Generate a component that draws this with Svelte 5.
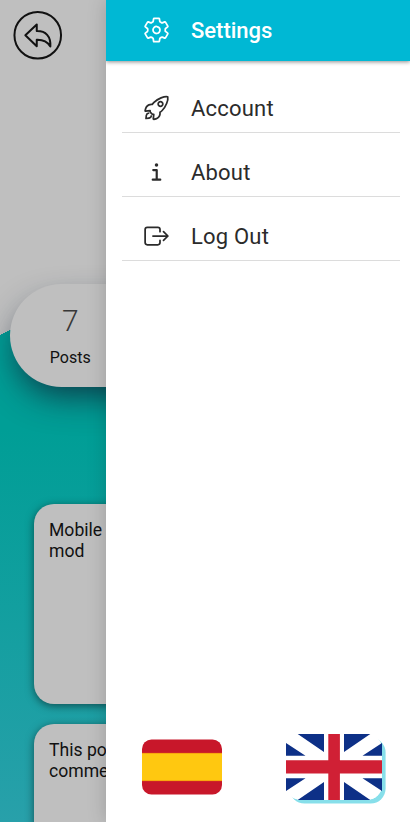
<script>
  const items = [
    { label: 'Account', icon: 'rocket' },
    { label: 'About', icon: 'info' },
    { label: 'Log Out', icon: 'exit' }
  ];
  const posts = [['Mobile', 'mod'], ['This post', 'comments']];
</script>

<div class="screen">
  <main class="profile">
    <header class="top">
      <svg class="back" viewBox="0.25 -0.25 50 50" width="50" height="50">
        <circle cx="25" cy="25" r="23.3" />
        <path d="M12.6 25 24 14.2V20.8C33 20.6 38.2 26 37.6 36.2C34.5 31.2 30 29.4 24 29.6V36Z" />
      </svg>
    </header>
    <section class="stats">
      <div class="stat">
        <span class="count">7</span>
        <span class="caption">Posts</span>
      </div>
    </section>
    <section class="posts">
      {#each posts as [first, second]}
        <article class="post">{first}<br />{second}</article>
      {/each}
    </section>
  </main>

  <aside class="menu">
    <header class="bar">
      <svg class="icon" viewBox="0 0 512 512">
        <path d="M262.29 192.31a64 64 0 1057.4 57.4 64.13 64.13 0 00-57.4-57.4zM416.39 256a154.34 154.34 0 01-1.53 20.79l45.21 35.46a10.81 10.81 0 012.45 13.75l-42.77 74a10.81 10.81 0 01-13.14 4.59l-44.9-18.08a16.11 16.11 0 00-15.17 1.75A164.48 164.48 0 01325 400.8a15.94 15.94 0 00-8.82 12.14l-6.73 47.89a11.08 11.08 0 01-10.68 9.17h-85.54a11.11 11.11 0 01-10.69-8.87l-6.72-47.82a16.07 16.07 0 00-9-12.22 155.3 155.3 0 01-21.46-12.57 16 16 0 00-15.11-1.71l-44.89 18.07a10.81 10.81 0 01-13.14-4.58l-42.77-74a10.8 10.8 0 012.45-13.75l38.21-30a16.05 16.05 0 006-14.08c-.36-4.17-.58-8.33-.58-12.5s.21-8.27.58-12.35a16 16 0 00-6.07-13.94l-38.19-30A10.81 10.81 0 0149.48 186l42.77-74a10.81 10.81 0 0113.14-4.59l44.9 18.08a16.11 16.11 0 0015.17-1.75A164.48 164.48 0 01187 111.2a15.94 15.94 0 008.82-12.14l6.73-47.89A11.08 11.08 0 01213.23 42h85.54a11.11 11.11 0 0110.69 8.87l6.72 47.82a16.07 16.07 0 009 12.22 155.3 155.3 0 0121.46 12.57 16 16 0 0015.11 1.71l44.89-18.07a10.81 10.81 0 0113.14 4.58l42.77 74a10.8 10.8 0 01-2.45 13.75l-38.21 30a16.05 16.05 0 00-6.05 14.08c.33 4.14.55 8.3.55 12.47z" />
      </svg>
      <h1>Settings</h1>
    </header>

    <nav>
      {#each items as item}
        <div class="item">
          <svg class="icon" viewBox="0 0 512 512">
            {#if item.icon === 'rocket'}
              <path d="M461.81 53.81a4.4 4.4 0 00-3.3-3.39c-54.38-13.3-180 34.09-248.13 102.17a294.9 294.9 0 00-33.09 39.08c-21-1.9-42-.3-59.88 7.5-50.49 22.2-65.18 80.18-69.28 105.07a9 9 0 009.8 10.4l81.07-8.9a180.29 180.29 0 001.1 18.3 18.15 18.15 0 005.3 11.09l31.39 31.39a18.15 18.15 0 0011.1 5.3 179.91 179.91 0 0018.19 1.1l-8.89 81a9 9 0 0010.39 9.79c24.9-4 83-18.69 105.07-69.17 7.8-17.9 9.4-38.79 7.6-59.69a293.91 293.91 0 0039.19-33.09c68.38-68 115.47-190.86 102.37-247.95zM298.66 213.67a42.7 42.7 0 1160.38 0 42.65 42.65 0 01-60.38 0z" />
              <path d="M109.64 352a45.06 45.06 0 00-26.35 12.84C65.67 382.52 64 448 64 448s65.52-1.67 83.15-19.31A44.73 44.73 0 00160 402.32" />
            {:else if item.icon === 'info'}
              <path class="heavy" d="M196 220h64v172M187 396h138" />
              <circle class="dot" cx="256" cy="128" r="32" />
            {:else}
              <path d="M320 176v-40a40 40 0 00-40-40H88a40 40 0 00-40 40v240a40 40 0 0040 40h192a40 40 0 0040-40v-40M384 176l80 80-80 80M191 256h273" />
            {/if}
          </svg>
          <span>{item.label}</span>
        </div>
      {/each}
    </nav>

    <footer class="languages">
      <svg class="spain" viewBox="0 0 80 56" width="80" height="56">
        <clipPath id="rounded"><rect y="0.4" width="80" height="55.1" rx="9.5" /></clipPath>
        <g clip-path="url(#rounded)">
          <rect width="80" height="56" fill="#c8172a" />
          <rect y="13.9" width="80" height="28.2" fill="#f79a0e" />
          <rect y="14.7" width="80" height="26.6" fill="#ffc810" />
        </g>
      </svg>
      <div class="selected">
        <svg viewBox="0 0 96 66" width="96" height="66">
          <rect width="96" height="66" rx="15" fill="#fff" />
          <path fill="#0d3087" d="M11.7 0H38V18ZM0 9 19.5 21.7H0ZM84.3 0H58V18ZM96 9 76.5 21.7H96ZM11.7 66H38V48ZM0 57 19.5 44.3H0ZM84.3 66H58V48ZM96 57 76.5 44.3H96Z" />
          <path fill="#d02035" d="M42.3 0H53.9V26.2H96V39.4H53.9V66H42.3V39.4H0V26.2H42.3Z" />
        </svg>
      </div>
    </footer>
  </aside>
</div>

<style>
  .screen {
    position: relative;
    width: 410px;
    height: 822px;
    overflow: hidden;
    background: #bfbfbf;
    font-family: Roboto, sans-serif;
  }
  .profile {
    display: flex;
    flex-direction: column;
    height: 822px;
    background: linear-gradient(#bfbfbf, #bfbfbf) 0 0 / 100% 284px no-repeat,
      linear-gradient(to bottom right, #bfbfbf 49.8%, transparent 50.2%) 0 284px / 102px 51px no-repeat,
      linear-gradient(#009e96 335px, #009e96 430px, #28a0aa 822px);
  }
  .top {
    height: 284px;
    flex: none;
  }
  .back {
    display: block;
    margin: 10px 0 0 13px;
    fill: none;
    stroke: #111;
    stroke-width: 2;
    stroke-linejoin: round;
  }
  .stats {
    flex: none;
    width: 390px;
    height: 103px;
    margin-left: 10px;
    border-radius: 52px;
    background: #bfbfbf;
    box-shadow: 0 15px 35px -8px rgba(16, 30, 50, 0.85);
  }
  .stat {
    display: flex;
    flex-direction: column;
    align-items: center;
    width: 120.6px;
    padding-top: 19px;
  }
  .count {
    font-size: 30px;
    line-height: 36px;
    font-weight: 300;
    color: #383838;
  }
  .caption {
    margin-top: 9px;
    font-size: 16px;
    line-height: 19px;
    color: #111;
  }
  .posts {
    display: flex;
    flex-direction: column;
    gap: 20px;
    margin: 117px 34px 0;
  }
  .post {
    box-sizing: border-box;
    flex: none;
    height: 200px;
    padding: 16px 15px 0;
    border-radius: 20px;
    background: #bfbfbf;
    box-shadow: 0 2px 8px rgba(0, 0, 0, 0.5);
    font-size: 17.6px;
    line-height: 21px;
    color: #111;
  }
  .menu {
    position: absolute;
    inset: 0 0 0 106px;
    display: flex;
    flex-direction: column;
    background: #fff;
    box-shadow: 0 0 18px rgba(0, 0, 0, 0.18);
  }
  .bar {
    display: flex;
    align-items: center;
    flex: none;
    height: 61px;
    padding-left: 36px;
    background: #00b8d4;
    color: #fff;
    box-shadow: 0 1px 4px rgba(0, 0, 0, 0.45);
    clip-path: inset(0 0 -8px 0);
  }
  h1 {
    margin: 0 0 0 20px;
    font-size: 22px;
    line-height: 26px;
    font-weight: 500;
  }
  .icon {
    flex: none;
    width: 29px;
    height: 28px;
    fill: none;
    stroke: currentColor;
    stroke-width: 32;
    stroke-linecap: round;
    stroke-linejoin: round;
  }
  .bar .icon {
    margin-bottom: 1px;
  }
  .heavy {
    stroke-width: 40;
  }
  .dot {
    fill: currentColor;
    stroke: none;
  }
  nav {
    display: flex;
    flex-direction: column;
    margin: 8px 10px 0 16px;
    color: #2b2b2b;
  }
  .item {
    box-sizing: border-box;
    display: flex;
    align-items: center;
    height: 64px;
    padding: 15px 0 0 20px;
    border-bottom: 1px solid #dcdcdc;
  }
  .item span {
    margin-left: 20px;
    padding-top: 2px;
    font-size: 22px;
    line-height: 26px;
    letter-spacing: 0.2px;
  }
  .languages {
    display: flex;
    justify-content: space-between;
    align-items: center;
    margin: auto 28px 22px 36px;
  }
  .spain {
    display: block;
  }
  .selected {
    width: 96px;
    height: 66px;
    border-radius: 15px;
    box-shadow: 3.6px 3.6px #87dfea;
  }
  .selected svg {
    display: block;
  }
</style>
